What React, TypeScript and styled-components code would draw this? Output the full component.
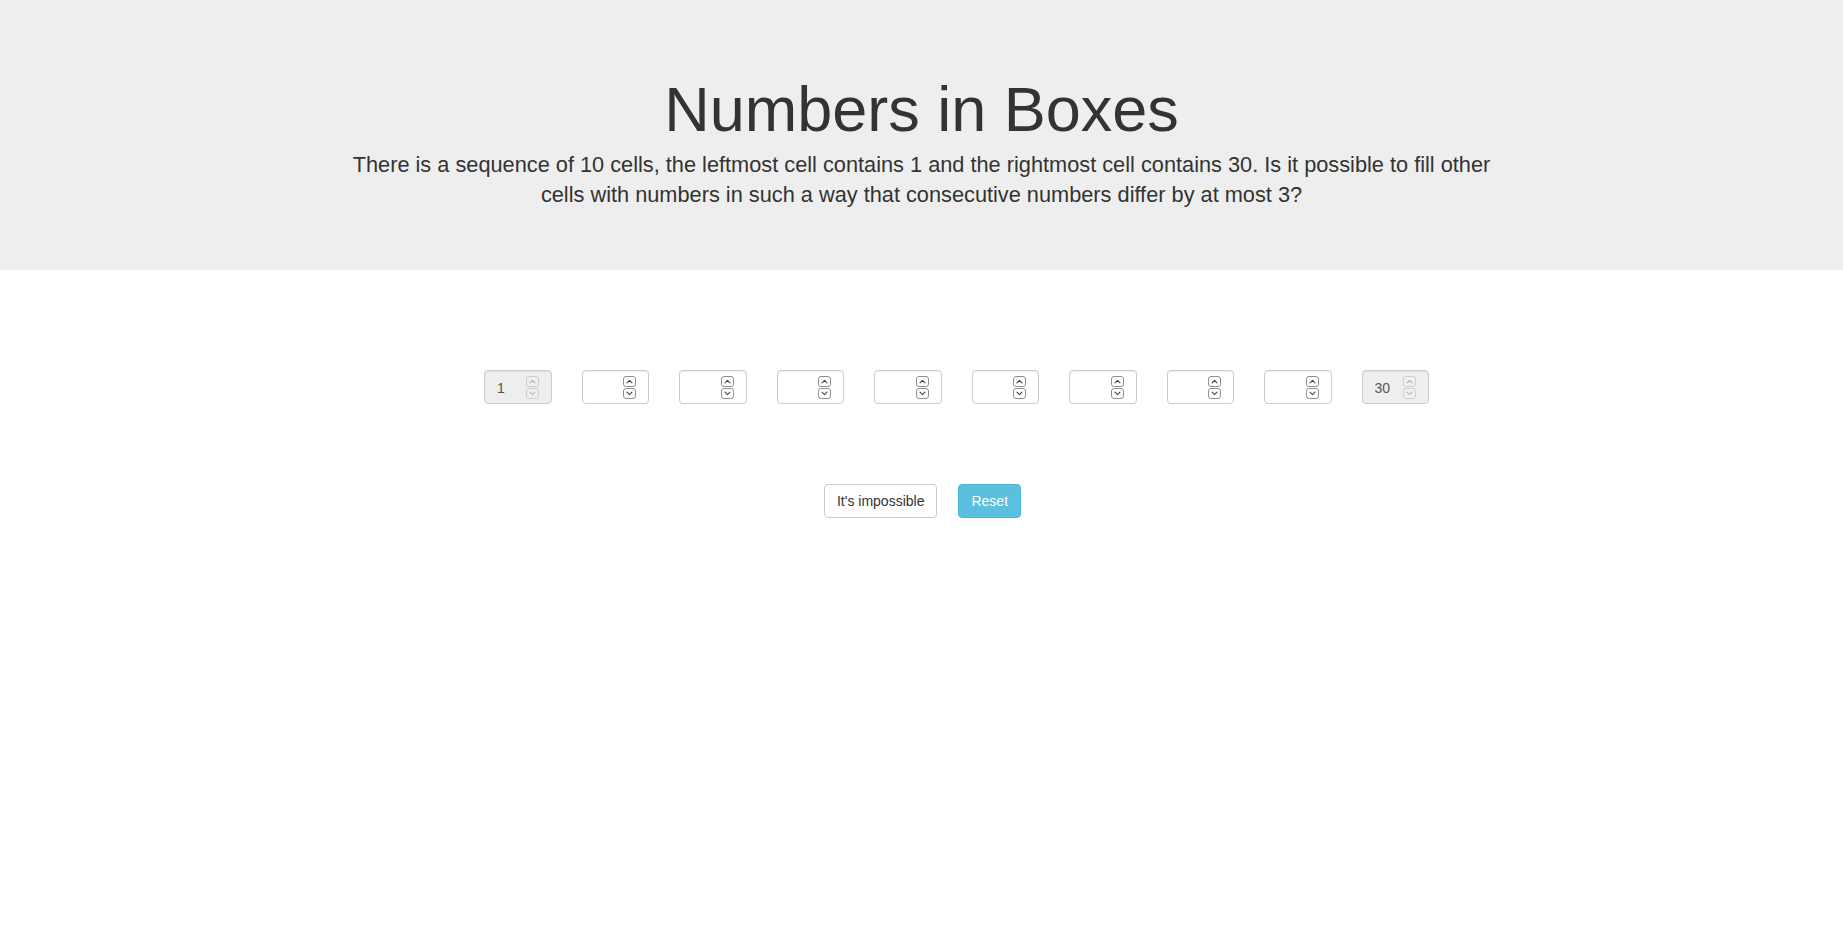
import React from "react";
import styled, { createGlobalStyle } from "styled-components";

const GlobalStyle = createGlobalStyle`
  * { box-sizing: border-box; }
  html, body { margin: 0; padding: 0; background: #fff; }
  body {
    font-family: "Liberation Sans", Helvetica, Arial, sans-serif;
    font-size: 14px;
    line-height: 1.42857;
    color: #333;
  }
  input[type="number"]::-webkit-inner-spin-button,
  input[type="number"]::-webkit-outer-spin-button {
    -webkit-appearance: none;
    margin: 0;
  }
`;

const Jumbotron = styled.header`
  background: #eee;
  padding: 48px 0;
  text-align: center;
`;

const Container = styled.div`
  width: 1170px;
  margin: 0 auto;
  padding: 0 15px;
`;

const Title = styled.h1`
  font-size: 63px;
  font-weight: 500;
  line-height: 1.1;
  margin: 26.5px 0 6.5px;
  color: #333;
`;

const Lead = styled.p`
  font-size: 21.75px;
  font-weight: 200;
  line-height: 30px;
  margin: 0 0 11.8px;
  color: #333;
`;

const CellRow = styled.div`
  display: flex;
  justify-content: center;
  gap: 30px;
  padding-left: 70px;
  padding-top: 100px;
`;

const CellWrap = styled.div`
  position: relative;
  width: 67.5px;
  height: 34px;
`;

const Cell = styled.input`
  width: 100%;
  height: 34px;
  padding: 7px 12px 5px;
  font-family: inherit;
  font-size: 14px;
  line-height: 1.42857;
  color: #555;
  background: ${(p) => (p.disabled ? "#eee" : "#fff")};
  border: 1px solid #ccc;
  border-radius: 4px;
  box-shadow: inset 0 1px 1px rgba(0, 0, 0, 0.075);
  opacity: 1;
  margin: 0;
  outline: none;
  -moz-appearance: textfield;
`;

const Spinner = styled.div`
  position: absolute;
  top: 6px;
  right: 13px;
  width: 13px;
  height: 23px;
  display: flex;
  flex-direction: column;
  gap: 1px;
  pointer-events: none;
`;

const SpinBox = styled.div<{ $off?: boolean }>`
  flex: 1;
  display: flex;
  align-items: center;
  justify-content: center;
  border: 1px solid ${(p) => (p.$off ? "#cfcfcf" : "#8f8f8f")};
  border-radius: 3px;
  background: ${(p) => (p.$off ? "#efefef" : "#fff")};
  color: ${(p) => (p.$off ? "#b5b5b5" : "#444")};
`;

const Actions = styled.div`
  display: flex;
  justify-content: center;
  gap: 21px;
  margin-top: 80px;
  padding-left: 2px;
`;

const Button = styled.button<{ $variant?: "info" | "default" }>`
  display: inline-block;
  height: 34px;
  padding: 7px 12px 5px;
  font-family: inherit;
  font-size: 14px;
  line-height: 1.42857;
  border-radius: 4px;
  cursor: pointer;
  border: 1px solid ${(p) => (p.$variant === "info" ? "#46b8da" : "#ccc")};
  background: ${(p) => (p.$variant === "info" ? "#5bc0de" : "#fff")};
  color: ${(p) => (p.$variant === "info" ? "#fff" : "#333")};
  margin: 0;
`;

function Chevron({ up }: { up?: boolean }) {
  return (
    <svg width="7" height="5" viewBox="0 0 7 5" fill="none">
      <path
        d={up ? "M1 3.8 L3.5 1.3 L6 3.8" : "M1 1.2 L3.5 3.7 L6 1.2"}
        stroke="currentColor"
        strokeWidth="1.1"
        strokeLinecap="round"
        strokeLinejoin="round"
      />
    </svg>
  );
}

function NumberCell({ value, fixed }: { value?: number; fixed?: boolean }) {
  return (
    <CellWrap>
      <Cell type="number" disabled={fixed} defaultValue={value} />
      <Spinner>
        <SpinBox $off={fixed}>
          <Chevron up />
        </SpinBox>
        <SpinBox $off={fixed}>
          <Chevron />
        </SpinBox>
      </Spinner>
    </CellWrap>
  );
}

export default function App() {
  const cells = Array.from({ length: 10 }, (_, i) => i);
  return (
    <>
      <GlobalStyle />
      <Jumbotron>
        <Container>
          <Title>Numbers in Boxes</Title>
          <Lead>
            There is a sequence of 10 cells, the leftmost cell contains 1 and the rightmost cell
            contains 30. Is it possible to fill other cells with numbers in such a way that
            consecutive numbers differ by at most 3?
          </Lead>
        </Container>
      </Jumbotron>
      <Container>
        <CellRow>
          {cells.map((i) =>
            i === 0 ? (
              <NumberCell key={i} value={1} fixed />
            ) : i === 9 ? (
              <NumberCell key={i} value={30} fixed />
            ) : (
              <NumberCell key={i} />
            )
          )}
        </CellRow>
        <Actions>
          <Button type="button">It's impossible</Button>
          <Button type="button" $variant="info">
            Reset
          </Button>
        </Actions>
      </Container>
    </>
  );
}
